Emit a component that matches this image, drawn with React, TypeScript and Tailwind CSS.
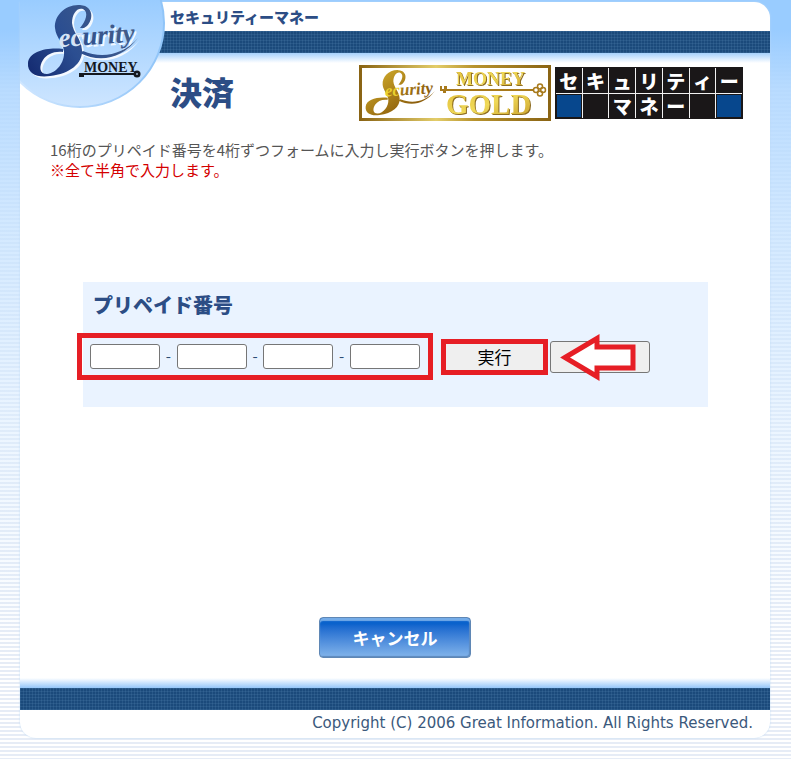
import type { ReactNode } from "react";

const CARD_FIELDS = ["1", "2", "3", "4"];

const TILE_ROWS = [
  ["セ", "キ", "ュ", "リ", "テ", "ィ", "ー"],
  ["blue", "", "マ", "ネ", "ー", "", "blue"],
];

function Band() {
  return (
    <div className="h-[22px] bg-[#1b4a7b] bg-[linear-gradient(rgba(90,140,185,0.2)_1px,transparent_1px),linear-gradient(90deg,rgba(90,140,185,0.2)_1px,transparent_1px)] bg-[size:3px_3px]" />
  );
}

function ScriptMark({ fill, light }: { fill: string; light: string }) {
  return (
    <g>
      <path
        d="M84 28C93 24 96 6 80 5C65 4 54 16 55 28C56 38 63 42 64 51C65 63 56 73 47 74C39 74 39 66 43 60C47 54 54 51 63 52L63 49C48 47 29 51 28 63C27 74 38 78 50 76C70 74 83 63 82 50C81 38 73 33 72 23C72 14 77 7 83 9C89 12 86 21 80 28Z"
        fill={fill}
      />
      <path d="M80 53C100 63 122 59 138 38C123 55 102 59 83 51Z" fill={fill} />
      <text
        x="59"
        y="47"
        fontFamily="Liberation Serif, serif"
        fontSize="27"
        fontStyle="italic"
        fontWeight="700"
        fill={fill}
        transform="rotate(-4 59 47)"
      >
        <tspan fill={light}>ec</tspan>urity
      </text>
    </g>
  );
}

function SiteLogo() {
  return (
    <svg
      className="absolute -left-5 -top-0.5 h-[110px] w-[168px]"
      viewBox="0 0 168 110"
      role="img"
      aria-label="Security Money"
    >
      <defs>
        <linearGradient id="disc" x1="0" y1="0" x2="0" y2="110" gradientUnits="userSpaceOnUse">
          <stop offset="0" stopColor="#99ccff" />
          <stop offset="1" stopColor="#cfe6ff" />
        </linearGradient>
        <linearGradient id="rim" x1="20" y1="0" x2="165" y2="0" gradientUnits="userSpaceOnUse">
          <stop offset="0" stopColor="#cfe6ff" />
          <stop offset="1" stopColor="#8fc4f8" />
        </linearGradient>
        <linearGradient id="navy" x1="30" y1="76" x2="135" y2="10" gradientUnits="userSpaceOnUse">
          <stop offset="0" stopColor="#142a70" />
          <stop offset="0.4" stopColor="#2b4e91" />
          <stop offset="1" stopColor="#4a6186" />
        </linearGradient>
        <clipPath id="panelEdge">
          <rect x="20" y="0" width="148" height="110" />
        </clipPath>
      </defs>
      <g clipPath="url(#panelEdge)">
        <circle cx="80" cy="23" r="84" fill="url(#disc)" stroke="url(#rim)" strokeWidth="2" />
      </g>
      <g transform="translate(2 2)" opacity="0.85">
        <ScriptMark fill="#ffffff" light="#ffffff" />
      </g>
      <ScriptMark fill="url(#navy)" light="#d5e3f6" />
      <text
        x="84"
        y="72"
        fontFamily="Liberation Serif, serif"
        fontSize="14"
        fontWeight="700"
        fill="#14181f"
      >
        MONEY
      </text>
      <path d="M79 73H134V75H84V77H79Z" fill="#14181f" />
      <circle cx="137" cy="74" r="3.5" fill="#14181f" />
      <circle cx="137" cy="74" r="1" fill="#9fb6d2" />
    </svg>
  );
}

function GoldBanner() {
  return (
    <svg
      className="h-14 w-48 shrink-0"
      viewBox="0 0 192 56"
      role="img"
      aria-label="Security Money Gold"
    >
      <defs>
        <linearGradient id="frame" x1="0" y1="0" x2="1" y2="0">
          <stop offset="0" stopColor="#8a6414" />
          <stop offset="0.4" stopColor="#e3cd6a" />
          <stop offset="0.6" stopColor="#b8932e" />
          <stop offset="1" stopColor="#8a6414" />
        </linearGradient>
        <linearGradient id="gold" x1="30" y1="5" x2="80" y2="76" gradientUnits="userSpaceOnUse">
          <stop offset="0" stopColor="#d9b52f" />
          <stop offset="1" stopColor="#8d5f0c" />
        </linearGradient>
        <linearGradient id="goldText" x1="0" y1="0" x2="1" y2="1">
          <stop offset="0" stopColor="#e0bd38" />
          <stop offset="0.5" stopColor="#f0d958" />
          <stop offset="1" stopColor="#c79c28" />
        </linearGradient>
      </defs>
      <rect x="1.5" y="1.5" width="189" height="53" fill="#ffffff" stroke="url(#frame)" strokeWidth="3" />
      <g transform="translate(-11 2) scale(0.63)">
        <ScriptMark fill="url(#gold)" light="#ead02f" />
      </g>
      <g
        className="drop-shadow-[1px_1px_0_#8d6c20]"
        fontFamily="Liberation Serif, serif"
        fontWeight="700"
        fill="url(#goldText)"
      >
        <text x="97" y="20" fontSize="18">
          MONEY
        </text>
        <text x="87" y="49" fontSize="29">
          GOLD
        </text>
      </g>
      <path d="M81 24H175V26H87V28H84V26H81ZM81 21H83V24H81ZM85 21H88V24H85Z" fill="#a87a1c" />
      <g fill="none" stroke="#a87a1c" strokeWidth="1.5">
        <circle cx="177" cy="25" r="2.5" />
        <circle cx="181" cy="21.5" r="2.5" />
        <circle cx="181" cy="28.5" r="2.5" />
        <circle cx="184" cy="25" r="2.5" />
      </g>
    </svg>
  );
}

function TileBanner() {
  return (
    <div className="grid h-[52px] w-[188px] shrink-0 grid-cols-7 gap-px border border-[#1a1718] bg-[#f2f2f2] text-[19px] font-black leading-none text-white">
      {TILE_ROWS.flat().map((cell, index) => (
        <span
          key={index}
          className={
            cell === "blue"
              ? "flex items-center justify-center border border-[#1a1718] bg-[#07478d]"
              : "flex items-center justify-center bg-[#1a1718]"
          }
        >
          {cell === "blue" ? null : cell}
        </span>
      ))}
    </div>
  );
}

function Highlight({ className, children }: { className: string; children: ReactNode }) {
  return <div className={`border-[5px] border-[#e61e25] ${className}`}>{children}</div>;
}

function PointerArrow() {
  return (
    <svg
      className="pointer-events-none absolute left-[10px] top-[-7px] h-[47px] w-[77px]"
      viewBox="0 0 77 47"
      aria-hidden
    >
      <path
        d="M5 23.5L37 4.5V13H73V34H37V42.5Z"
        fill="#ffffff"
        stroke="#e61e25"
        strokeWidth="5"
      />
    </svg>
  );
}

function PrepaidForm() {
  return (
    <form
      className="ml-[63px] mr-[62px] mt-[102px] h-[125px] bg-[#eaf3ff]"
      onSubmit={(event) => event.preventDefault()}
    >
      <h2 className="pl-[10px] pt-2 text-[20px] font-black leading-[30px] text-[#2c4d85]">
        プリペイド番号
      </h2>
      <div className="-ml-[6px] mt-[13px] flex items-center">
        <Highlight className="flex h-[47px] w-[356px] shrink-0 items-center justify-between px-2 text-[#2c4d75]">
          {CARD_FIELDS.map((field, index) => (
            <div key={field} className="contents">
              {index > 0 ? <span className="text-[15px]">-</span> : null}
              <input
                type="text"
                maxLength={4}
                aria-label={`プリペイド番号 ${field}`}
                className="h-[25px] w-[70px] rounded-[3px] border border-[#767676] bg-white px-1 text-[15px]"
              />
            </div>
          ))}
        </Highlight>
        <Highlight className="ml-2 h-9 w-[107px] shrink-0">
          <button
            type="submit"
            className="block h-full w-full bg-[#efefef] text-[17px] leading-[24px] text-black"
          >
            実行
          </button>
        </Highlight>
        <div className="relative ml-[2px] shrink-0">
          <button
            type="reset"
            aria-label="クリア"
            className="block h-8 w-[100px] rounded-[3px] border border-[#767676] bg-[#efefef]"
          />
          <PointerArrow />
        </div>
      </div>
    </form>
  );
}

export default function App() {
  return (
    <div className="min-h-screen bg-[linear-gradient(#99ccff_0px,#99ccff_30px,rgba(178,216,255,0.9)_90px,rgba(195,225,255,0.75)_220px,rgba(215,235,255,0.5)_420px,rgba(255,255,255,0)_660px),repeating-linear-gradient(#ffffff_0px,#ffffff_2px,#e6ecf6_2px,#e6ecf6_4px)] pb-5 pl-5 pr-[21px] pt-0.5 font-['Noto_Sans_CJK_JP','Noto_Sans',sans-serif]">
      <div className="relative mx-auto max-w-[750px] rounded-b-[16px] rounded-tr-[16px] bg-white shadow-[0_0_2px_#bcd8f3]">
        <header>
          <div className="flex h-[29px] items-center pl-[150px] text-[15px] font-black leading-none text-[#2c4d85]">
            セキュリティーマネー
          </div>
          <Band />
          <div className="h-[10px] bg-linear-to-b from-[#a5d0fb] to-white" />
          <SiteLogo />
          <div className="flex items-start pl-[150px] pr-[27px] pt-[2px]">
            <h1 className="text-[32px] font-black leading-[52px] text-[#2c4d85]">決済</h1>
            <div className="ml-auto flex items-center gap-1">
              <GoldBanner />
              <TileBanner />
            </div>
          </div>
        </header>

        <main>
          <div className="mt-[19px] px-[30px] text-[15px] leading-5 text-[#555555]">
            <p>16桁のプリペイド番号を4桁ずつフォームに入力し実行ボタンを押します。</p>
            <p className="text-[#d40000]">※全て半角で入力します。</p>
          </div>
          <PrepaidForm />
          <div className="mt-[210px] flex justify-center pb-5">
            <button
              type="button"
              className="h-[41px] w-[152px] rounded-[4px] border border-[#5f87b5] bg-linear-to-b from-[#0a62cc] from-15% to-[#82b4ea] text-[17px] font-bold leading-none text-white shadow-[inset_0_3px_1px_#75ace8,inset_-1px_-1px_1px_#5c89bd]"
            >
              キャンセル
            </button>
          </div>
        </main>

        <footer>
          <div className="h-[10px] bg-linear-to-b from-white to-[#94c6f9]" />
          <Band />
          <p className="pr-[17px] text-right font-['DejaVu_Sans',sans-serif] text-[15px] leading-[26px] text-[#3b597c] pb-0.5">
            Copyright (C) 2006 Great Information. All Rights Reserved.
          </p>
        </footer>
      </div>
    </div>
  );
}
